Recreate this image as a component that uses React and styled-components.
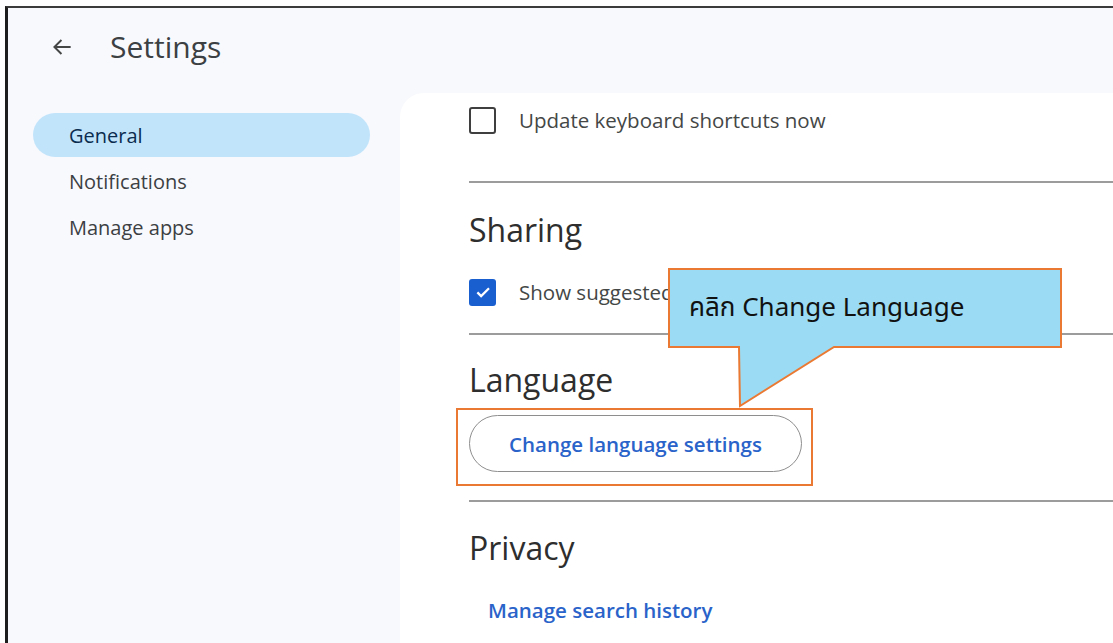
import React from "react";
import styled, { createGlobalStyle } from "styled-components";

const GlobalStyle = createGlobalStyle`
  html, body {
    margin: 0;
    padding: 0;
    background: #ffffff;
    overflow: hidden;
  }
  body {
    font-family: "Open Sans", Roboto, Arial, sans-serif;
  }
`;

const Frame = styled.div`
  position: relative;
  margin: 6px 0 0 5px;
  height: 637px;
  border-top: 2px solid #3b3b3b;
  border-left: 3px solid #1e1e1e;
  background: #f8f9fd;
  display: flex;
  flex-direction: column;
  overflow: hidden;
`;

const Header = styled.header`
  height: 85px;
  display: flex;
  align-items: center;
  gap: 35px;
  padding-left: 41px;
  padding-bottom: 8px;
  box-sizing: border-box;
`;

const BackButton = styled.button`
  border: 0;
  background: none;
  padding: 0;
  display: flex;
  color: #444746;
`;

const Title = styled.h1`
  margin: 0;
  font-size: 30px;
  font-weight: 400;
  color: #3c4043;
`;

const Body = styled.div`
  flex: 1;
  display: flex;
`;

const Sidebar = styled.nav`
  width: 392px;
  flex-shrink: 0;
  padding: 20px 0 0 25px;
  box-sizing: border-box;
  display: flex;
  flex-direction: column;
  gap: 2px;
`;

const NavItem = styled.div`
  width: 337px;
  height: 44px;
  border-radius: 22px;
  display: flex;
  align-items: center;
  padding-left: 36px;
  box-sizing: border-box;
  font-size: 20px;
  color: ${(p) => (p.$active ? "#0b2c4f" : "#3c4043")};
  background: ${(p) => (p.$active ? "#c2e4fb" : "transparent")};
`;

const Card = styled.main`
  flex: 1;
  background: #ffffff;
  border-top-left-radius: 24px;
  padding: 3px 0 0 69px;
  display: flex;
  flex-direction: column;
`;

const CheckRow = styled.label`
  height: 48px;
  display: flex;
  align-items: center;
  gap: 23px;
  font-size: 20.5px;
  color: #444746;
  white-space: nowrap;
  margin-top: ${(p) => p.$mt || 0}px;
`;

const Box = styled.span`
  width: 27px;
  height: 27px;
  box-sizing: border-box;
  border-radius: 3px;
  border: ${(p) => (p.$checked ? "0" : "2.5px solid #3f3f3f")};
  background: ${(p) => (p.$checked ? "#1a5fd0" : "transparent")};
  display: flex;
  align-items: center;
  justify-content: center;
  flex-shrink: 0;
`;

const Divider = styled.hr`
  margin: ${(p) => p.$mt}px 0 0 0;
  border: 0;
  height: 2px;
  background: #9c9c9c;
`;

const Heading = styled.h2`
  margin: ${(p) => p.$mt}px 0 0 0;
  height: 40px;
  line-height: 40px;
  font-size: 32px;
  font-weight: 400;
  color: #2e2e2e;
`;

const PillButton = styled.button`
  margin-top: 15px;
  width: 333px;
  height: 57px;
  border: 1.5px solid #8e8e8e;
  border-radius: 29px;
  background: #fff;
  font-family: inherit;
  font-size: 20.5px;
  font-weight: 600;
  color: #2a63c9;
  align-self: flex-start;
`;

const TextLink = styled.a`
  margin: 30px 0 0 19px;
  line-height: 24px;
  font-size: 20.5px;
  font-weight: 600;
  color: #2a63c9;
  text-decoration: none;
`;

/* annotation overlays drawn on top of the settings page */
const Highlight = styled.div`
  position: absolute;
  left: 448px;
  top: 400px;
  width: 357px;
  height: 78px;
  border: 2px solid #ea7a33;
  box-sizing: border-box;
  pointer-events: none;
`;

const Callout = styled.div`
  position: absolute;
  left: 660px;
  top: 260px;
  width: 395px;
  height: 140px;
  pointer-events: none;
`;

const CalloutShape = styled.svg`
  position: absolute;
  inset: 0;
`;

const CalloutText = styled.div`
  position: relative;
  height: 79px;
  display: flex;
  align-items: center;
  padding-left: 21px;
  font-family: "Noto Sans Thai", "Leelawadee UI", Tahoma, "Open Sans", sans-serif;
  font-size: 26px;
  color: #111;
`;

export default function App() {
  return (
    <>
      <GlobalStyle />
      <Frame>
        <Header>
          <BackButton aria-label="Back">
            <svg width="26" height="26" viewBox="0 0 24 24">
              <path
                d="M20 12H5M11.5 5.5L5 12l6.5 6.5"
                fill="none"
                stroke="currentColor"
                strokeWidth="1.8"
              />
            </svg>
          </BackButton>
          <Title>Settings</Title>
        </Header>
        <Body>
          <Sidebar>
            <NavItem $active>General</NavItem>
            <NavItem>Notifications</NavItem>
            <NavItem>Manage apps</NavItem>
          </Sidebar>
          <Card>
            <CheckRow>
              <Box />
              Update keyboard shortcuts now
            </CheckRow>
            <Divider $mt={37} />
            <Heading $mt={27}>Sharing</Heading>
            <CheckRow $mt={18}>
              <Box $checked>
                <svg width="18" height="18" viewBox="0 0 24 24">
                  <path
                    d="M4.5 12.5l5 5L20 7"
                    fill="none"
                    stroke="#fff"
                    strokeWidth="3"
                  />
                </svg>
              </Box>
              Show suggested contacts
            </CheckRow>
            <Divider $mt={17} />
            <Heading $mt={25}>Language</Heading>
            <PillButton>Change language settings</PillButton>
            <Divider $mt={28} />
            <Heading $mt={26}>Privacy</Heading>
            <TextLink href="#">Manage search history</TextLink>
          </Card>
        </Body>
        <Highlight />
        <Callout>
          <CalloutShape width="395" height="140" viewBox="0 0 395 140">
            <path
              d="M1 1H393V79H166L72 138L71 79H1Z"
              fill="#9bdcf4"
              stroke="#ea7a33"
              strokeWidth="2"
            />
          </CalloutShape>
          <CalloutText>คลิก Change Language</CalloutText>
        </Callout>
      </Frame>
    </>
  );
}
